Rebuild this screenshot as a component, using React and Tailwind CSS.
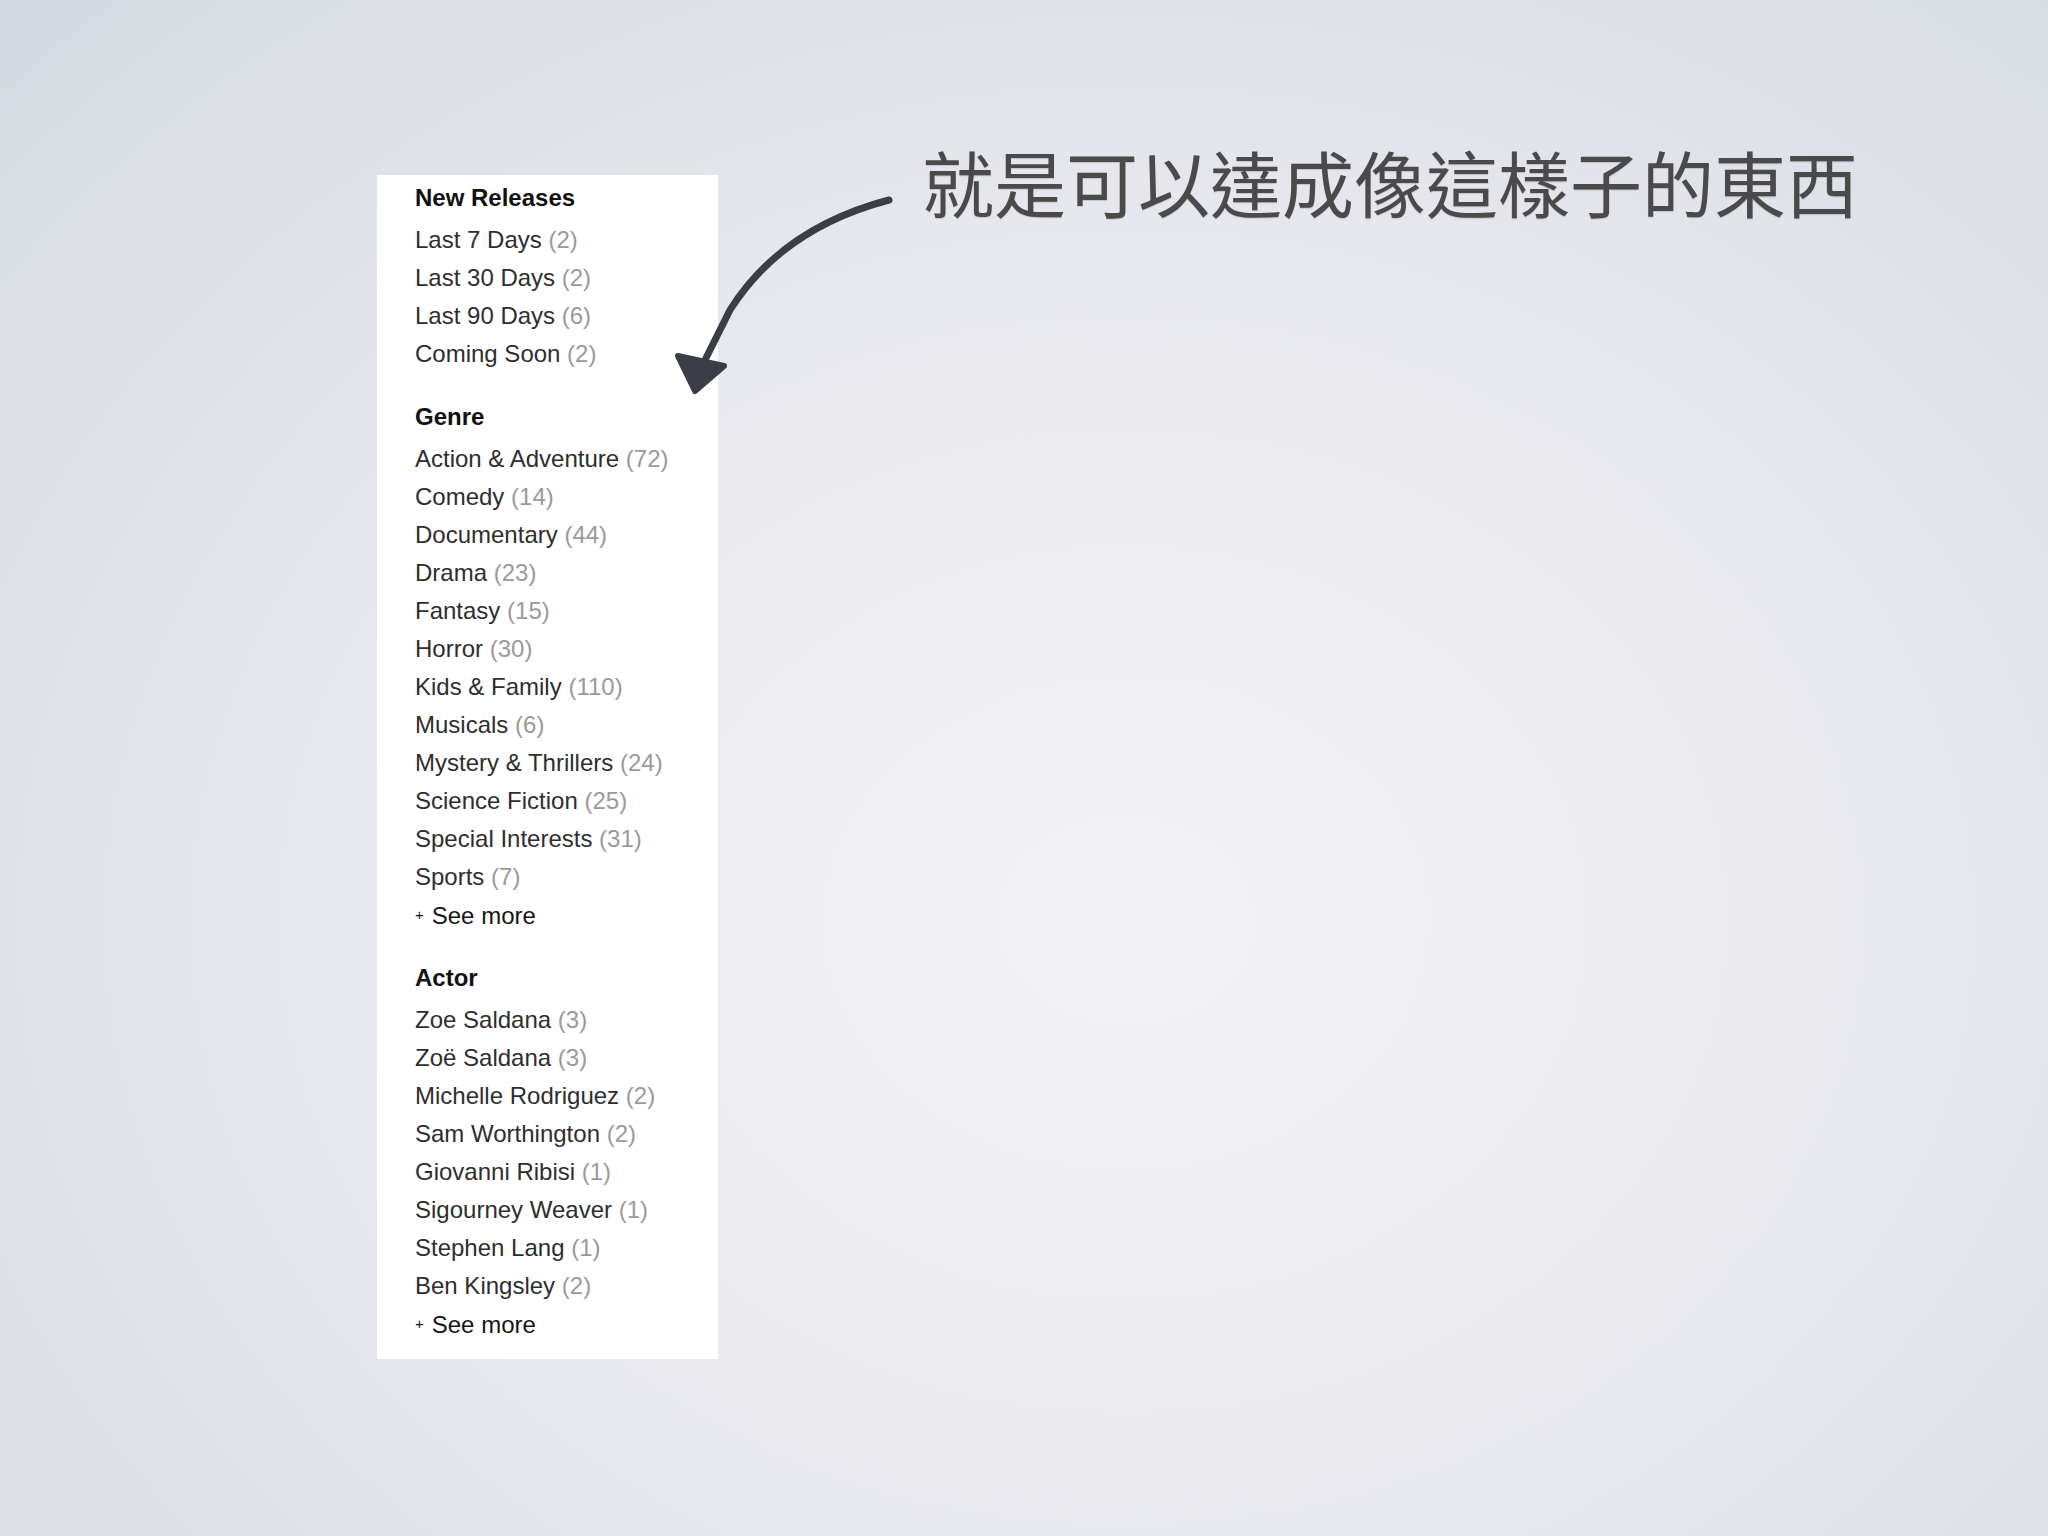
import React from "react";

const sections = [
  {
    title: "New Releases",
    items: [
      ["Last 7 Days", 2],
      ["Last 30 Days", 2],
      ["Last 90 Days", 6],
      ["Coming Soon", 2],
    ],
  },
  {
    title: "Genre",
    items: [
      ["Action & Adventure", 72],
      ["Comedy", 14],
      ["Documentary", 44],
      ["Drama", 23],
      ["Fantasy", 15],
      ["Horror", 30],
      ["Kids & Family", 110],
      ["Musicals", 6],
      ["Mystery & Thrillers", 24],
      ["Science Fiction", 25],
      ["Special Interests", 31],
      ["Sports", 7],
    ],
    more: true,
  },
  {
    title: "Actor",
    items: [
      ["Zoe Saldana", 3],
      ["Zoë Saldana", 3],
      ["Michelle Rodriguez", 2],
      ["Sam Worthington", 2],
      ["Giovanni Ribisi", 1],
      ["Sigourney Weaver", 1],
      ["Stephen Lang", 1],
      ["Ben Kingsley", 2],
    ],
    more: true,
  },
];

function Arrow() {
  return (
    <svg
      className="absolute left-[660px] top-[180px]"
      width="250"
      height="230"
      viewBox="0 0 250 230"
      fill="none"
    >
      <path
        d="M229 20 Q 122 48 70 130 L 46 178"
        stroke="#3b3e46"
        strokeWidth="7"
        strokeLinecap="round"
        strokeLinejoin="round"
      />
      <polygon points="18,176 64,186 35,211" fill="#3b3e46" stroke="#3b3e46" strokeWidth="6" strokeLinejoin="round" />
    </svg>
  );
}

export default function App() {
  return (
    <div className="relative w-full h-[1536px] overflow-hidden bg-[radial-gradient(ellipse_at_55%_60%,#f2f2f6_0%,#e8e9ee_50%,#d4d9e1_100%)] font-['Liberation_Sans',Arial,sans-serif]">
      <div className="flex items-start pl-[377px] pt-[145px]">
        <div className="mt-[30px] w-[341px] h-[1184px] bg-white pl-[38px] pt-[4px]">
          {sections.map((s, i) => (
            <div key={s.title} className={i > 0 ? "mt-[25px]" : ""}>
              <div className="h-[38px] leading-[38px] mb-[4px] text-[24px] font-bold text-[#111]">{s.title}</div>
              {s.items.map(([name, n]) => (
                <div key={name} className="h-[38px] leading-[38px] text-[24px] text-[#2e2e2e] whitespace-nowrap">
                  {name} <span className="text-[#9a9a9a]">({n})</span>
                </div>
              ))}
              {s.more && (
                <div className="h-[38px] leading-[38px] text-[24px] text-[#151515] whitespace-nowrap">
                  <span className="text-[15px] align-[4px] mr-[8px]">+</span>See more
                </div>
              )}
            </div>
          ))}
        </div>
        <div className="ml-[204px] text-[72px] leading-[72px] text-[#4a4a4a] font-['Noto_Sans_CJK_TC','Noto_Sans_CJK_SC',sans-serif] [text-shadow:0_1px_1px_rgba(0,0,0,0.15)]">
          就是可以達成像這樣子的東西
        </div>
      </div>
      <Arrow />
    </div>
  );
}
